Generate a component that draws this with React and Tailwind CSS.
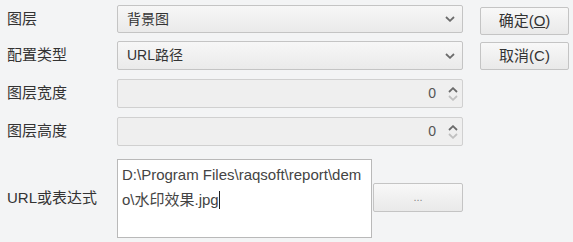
import React from 'react';

const font = { fontFamily: '"Liberation Sans", "Noto Sans CJK SC", sans-serif' };

const Chevron = ({ up = false, className = '' }) => (
  <svg width="10" height="6" viewBox="0 0 10 6" className={className}>
    <path
      d={up ? 'M1 5 L5 1.2 L9 5' : 'M1 1 L5 4.8 L9 1'}
      fill="none"
      stroke="currentColor"
      strokeWidth="1.8"
    />
  </svg>
);

const Label = ({ children }) => (
  <div className="w-[117px] shrink-0 pl-[7px] text-[15px] text-[#333]">{children}</div>
);

const Select = ({ value }) => (
  <div className="flex h-full flex-1 items-center justify-between rounded-[2px] border border-[#c4c4c4] bg-gradient-to-b from-[#f7f7f7] to-[#eaeaea] pl-[9px] pr-[7px] text-[14px] text-[#333]">
    <span>{value}</span>
    <Chevron className="text-[#6b6b6b]" />
  </div>
);

const Spinner = () => (
  <div className="flex h-full flex-1 items-center justify-end rounded-[2px] border border-[#d0d0d0] bg-[#efefef] pr-[4px] text-[14px] text-[#555]">
    <span className="mr-[12px]">0</span>
    <div className="flex flex-col gap-[2px]">
      <Chevron up className="text-[#6a6a6a]" />
      <Chevron className="text-[#c0c0c0]" />
    </div>
  </div>
);

const Button = ({ children }) => (
  <button className="flex h-[28px] w-[89px] items-center justify-center rounded-[2px] border border-[#c4c4c4] bg-gradient-to-b from-[#f8f8f8] to-[#e9e9e9] text-[15px] text-[#333]">
    {children}
  </button>
);

export default function App() {
  return (
    <div className="flex h-[242px] w-[573px] bg-[#f3f4f5]" style={font}>
      {/* form */}
      <div className="flex w-[463px] flex-col pt-[5px]">
        <div className="flex h-[28px] items-center">
          <Label>图层</Label>
          <Select value="背景图" />
        </div>
        <div className="mt-[8px] flex h-[29px] items-center">
          <Label>配置类型</Label>
          <Select value="URL路径" />
        </div>
        <div className="mt-[9px] flex h-[29px] items-center">
          <Label>图层宽度</Label>
          <Spinner />
        </div>
        <div className="mt-[9px] flex h-[29px] items-center">
          <Label>图层高度</Label>
          <Spinner />
        </div>
        <div className="mt-[13px] flex items-center">
          <Label>URL或表达式</Label>
          <div className="h-[79px] w-[255px] shrink-0 whitespace-nowrap border border-[#b9b9b9] bg-white pl-[4px] pt-[2px] text-[15px] leading-[25px] text-[#444]">
            D:\Program Files\raqsoft\report\dem
            <br />
            o\水印效果.jpg<span className="inline-block h-[18px] w-px translate-y-[4px] bg-[#222]" />
          </div>
          <button className="ml-[1px] mt-[-2px] flex h-[29px] flex-1 items-center justify-center rounded-[2px] border border-[#c4c4c4] bg-gradient-to-b from-[#f8f8f8] to-[#e9e9e9] text-[11px] text-[#888]">
            ...
          </button>
        </div>
      </div>
      {/* buttons */}
      <div className="ml-[17px] flex flex-col gap-[7px] pt-[7px]">
        <Button>
          确定(<span className="underline">O</span>)
        </Button>
        <Button>取消(C)</Button>
      </div>
    </div>
  );
}
